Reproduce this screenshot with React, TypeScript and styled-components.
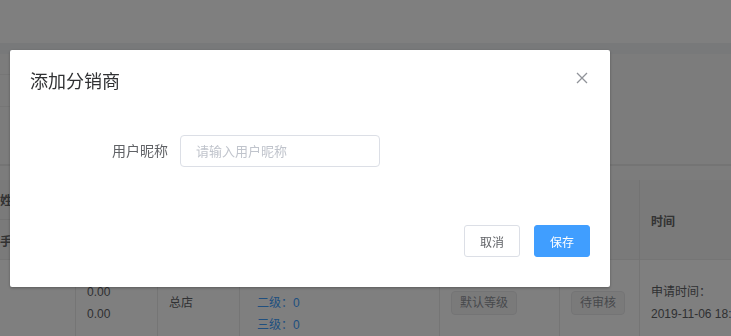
import React from "react";
import styled, { createGlobalStyle } from "styled-components";

const Global = createGlobalStyle`
  html, body { margin: 0; padding: 0; }
  body {
    width: 731px;
    height: 336px;
    overflow: hidden;
    font-family: "Liberation Sans", "Noto Sans CJK SC", sans-serif;
    background: #f0f2f5;
  }
`;

const Page = styled.div`
  display: flex;
  flex-direction: column;
  width: 731px;
  height: 336px;
  overflow: hidden;
  background: #f0f2f5;
`;

const TopBar = styled.div`
  height: 43px;
  background: #ffffff;
  flex: none;
`;

const Content = styled.div`
  display: flex;
  flex-direction: column;
  padding-top: 11px;
`;

const FilterCard = styled.div`
  height: 110px;
  background: #f8f8f8;
  border-bottom: 2px solid #e8e8e8;
  display: flex;
  flex-direction: column;
`;

const FilterLine = styled.div<{ $h: number }>`
  width: 75px;
  height: ${(p) => p.$h}px;
  border-bottom: 1px solid #ececec;
`;

const Gap = styled.div`
  height: 14px;
  background: #f8f8f8;
`;

const Table = styled.div`
  display: flex;
  flex-direction: column;
  background: #ffffff;
  color: #606266;
  font-size: 12px;
`;

const cols = "75px 82px 82px 200px 120px 80px 1fr";

const HeaderRow = styled.div`
  display: grid;
  grid-template-columns: ${cols};
  height: 80px;
  background: #f4f4f4;
  border-bottom: 1px solid #eaeaea;
  box-sizing: border-box;
`;

const HeadCell = styled.div<{ $first?: boolean }>`
  display: flex;
  align-items: center;
  padding-left: ${(p) => (p.$first ? 0 : 11)}px;
  border-left: ${(p) => (p.$first ? "none" : "1px solid #e6e6e6")};
  font-weight: bold;
  color: #666666;
`;

const StackHead = styled.div`
  display: flex;
  flex-direction: column;
  font-weight: bold;
  color: #666666;
`;

const SubHead = styled.div<{ $line?: boolean }>`
  height: 40px;
  display: flex;
  align-items: center;
  border-bottom: ${(p) => (p.$line ? "1px solid #e6e6e6" : "none")};
  box-sizing: border-box;
`;

const BodyRow = styled.div`
  display: grid;
  grid-template-columns: ${cols};
  height: 86px;
`;

const Cell = styled.div<{ $first?: boolean; $pad?: number }>`
  display: flex;
  flex-direction: column;
  justify-content: center;
  padding-left: ${(p) => p.$pad ?? 11}px;
  border-left: ${(p) => (p.$first ? "none" : "1px solid #ebebeb")};
  line-height: 22.5px;
`;

const Blue = styled.div`
  color: #409eff;
`;

const Tag = styled.span`
  align-self: flex-start;
  display: inline-flex;
  align-items: center;
  height: 24px;
  padding: 0 8px;
  box-sizing: border-box;
  background: #f4f4f5;
  border: 1px solid #e9e9eb;
  border-radius: 4px;
  color: #909399;
  font-size: 12px;
`;

const Overlay = styled.div`
  position: fixed;
  inset: 0;
  background: rgba(0, 0, 0, 0.5);
`;

const Dialog = styled.div`
  position: fixed;
  left: 10px;
  top: 50px;
  width: 600px;
  background: #ffffff;
  border-radius: 2px;
  box-shadow: 0 1px 3px rgba(0, 0, 0, 0.3);
  display: flex;
  flex-direction: column;
`;

const DialogHeader = styled.div`
  position: relative;
  padding: 20px 20px 10px;
`;

const Title = styled.span`
  font-size: 18px;
  line-height: 24px;
  color: #303133;
`;

const CloseBtn = styled.button`
  position: absolute;
  top: 20px;
  right: 20px;
  width: 16px;
  height: 16px;
  padding: 0;
  border: none;
  background: transparent;
  display: flex;
  cursor: pointer;
`;

const DialogBody = styled.div`
  padding: 31px 20px 30px;
`;

const FormItem = styled.div`
  display: flex;
  align-items: center;
  margin-bottom: 22px;
`;

const Label = styled.label`
  width: 150px;
  box-sizing: border-box;
  padding-right: 12px;
  text-align: right;
  font-size: 14px;
  line-height: 32px;
  color: #606266;
`;

const Input = styled.input`
  width: 200px;
  height: 32px;
  box-sizing: border-box;
  padding: 0 15px;
  border: 1px solid #dcdfe6;
  border-radius: 4px;
  font-size: 13px;
  font-family: "Liberation Sans", "Noto Sans CJK SC", sans-serif;
  color: #606266;
  outline: none;
  &::placeholder {
    color: #c0c4cc;
  }
`;

const Footer = styled.div`
  display: flex;
  justify-content: flex-end;
  gap: 14px;
  padding: 6px 20px 30px;
`;

const Button = styled.button<{ $primary?: boolean }>`
  height: 32px;
  width: 56px;
  padding: 0;
  border-radius: 3px;
  font-size: 12px;
  font-family: "Liberation Sans", "Noto Sans CJK SC", sans-serif;
  border: 1px solid ${(p) => (p.$primary ? "#409eff" : "#dcdfe6")};
  background: ${(p) => (p.$primary ? "#409eff" : "#ffffff")};
  color: ${(p) => (p.$primary ? "#ffffff" : "#606266")};
  cursor: pointer;
`;

export default function App() {
  return (
    <>
      <Global />
      <Page>
        <TopBar />
        <Content>
          <FilterCard>
            <FilterLine $h={20} />
            <FilterLine $h={31} />
          </FilterCard>
          <Gap />
          <Table>
            <HeaderRow>
              <StackHead>
                <SubHead $line>姓名</SubHead>
                <SubHead>手机号</SubHead>
              </StackHead>
              <HeadCell>佣金</HeadCell>
              <HeadCell>上级</HeadCell>
              <HeadCell>下级</HeadCell>
              <HeadCell>等级</HeadCell>
              <HeadCell>状态</HeadCell>
              <HeadCell>时间</HeadCell>
            </HeaderRow>
            <BodyRow>
              <Cell $first />
              <Cell>
                <div>0.00</div>
                <div>0.00</div>
              </Cell>
              <Cell>
                <div>总店</div>
              </Cell>
              <Cell $pad={17}>
                <Blue>一级：0</Blue>
                <Blue>二级：0</Blue>
                <Blue>三级：0</Blue>
              </Cell>
              <Cell>
                <Tag>默认等级</Tag>
              </Cell>
              <Cell>
                <Tag>待审核</Tag>
              </Cell>
              <Cell>
                <div>申请时间：</div>
                <div style={{ whiteSpace: "nowrap" }}>2019-11-06 18:32:10</div>
              </Cell>
            </BodyRow>
          </Table>
        </Content>
      </Page>
      <Overlay />
      <Dialog>
        <DialogHeader>
          <Title>添加分销商</Title>
          <CloseBtn aria-label="关闭">
            <svg width="16" height="16" viewBox="0 0 16 16">
              <path d="M3 3 L13 13 M13 3 L3 13" stroke="#909399" strokeWidth="1.3" fill="none" />
            </svg>
          </CloseBtn>
        </DialogHeader>
        <DialogBody>
          <FormItem>
            <Label>用户昵称</Label>
            <Input placeholder="请输入用户昵称" />
          </FormItem>
        </DialogBody>
        <Footer>
          <Button>取消</Button>
          <Button $primary>保存</Button>
        </Footer>
      </Dialog>
    </>
  );
}
